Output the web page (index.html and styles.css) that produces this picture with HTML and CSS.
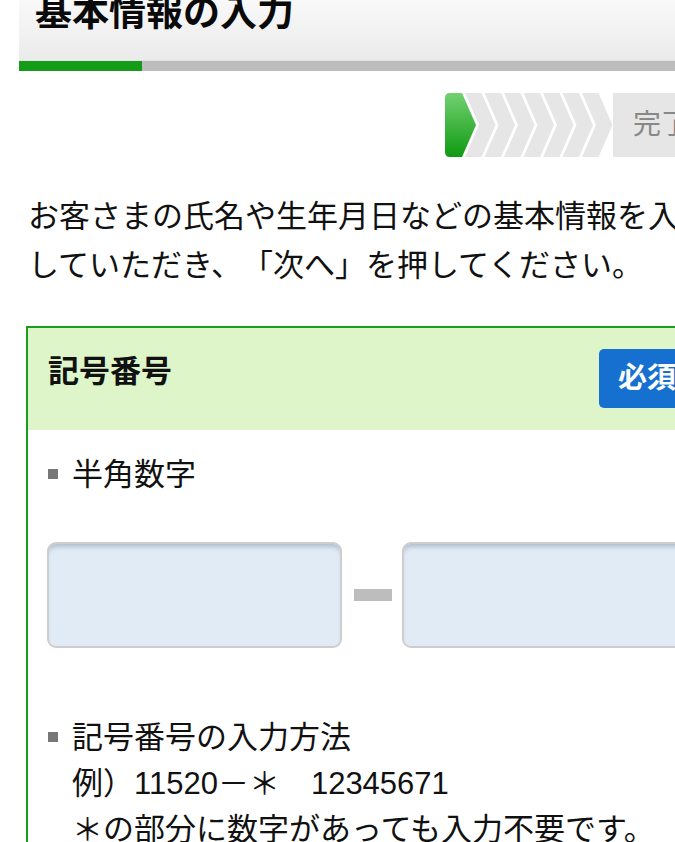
FILE: index.html
```html
<!DOCTYPE html>
<html>
<head>
    <meta charset="utf-8">
    <title>基本情報の入力</title>
    <link rel="stylesheet" href="styles.css">
</head>
<body>
    <div class="page">
        <div class="page-head">
            <h1>基本情報の入力</h1>
        </div>
        <div class="progress">
            <div class="progress-done"></div>
        </div>

        <div class="steps">
            <svg class="steps-arrows" width="168" height="64" viewBox="0 0 168 64">
                <defs>
                    <linearGradient id="stepGreen" x1="0" y1="0" x2="0" y2="1">
                        <stop offset="0" stop-color="#72d172"/>
                        <stop offset="1" stop-color="#0f9a12"/>
                    </linearGradient>
                </defs>
                <path d="M5,0 H17 L31,32 L17,64 H5 Q0,64 0,59 V5 Q0,0 5,0 Z" fill="url(#stepGreen)"/>
                <g fill="#e6e6e6">
                    <polygon points="20,0 36.5,0 50.5,32 36.5,64 20,64 34,32"/>
                    <polygon points="39.5,0 56,0 70,32 56,64 39.5,64 53.5,32"/>
                    <polygon points="59,0 75.5,0 89.5,32 75.5,64 59,64 73,32"/>
                    <polygon points="78.5,0 95,0 109,32 95,64 78.5,64 92.5,32"/>
                    <polygon points="98,0 114.5,0 128.5,32 114.5,64 98,64 112,32"/>
                    <polygon points="117.5,0 134,0 148,32 134,64 117.5,64 131.5,32"/>
                    <polygon points="137,0 153.5,0 167.5,32 153.5,64 137,64 151,32"/>
                </g>
            </svg>
            <div class="steps-last">完了</div>
        </div>

        <p class="lead">お客さまの氏名や生年月日などの基本情報を入力していただき、「次へ」を押してください。</p>

        <div class="card">
            <div class="card-head">
                <h2>記号番号</h2>
                <span class="badge">必須</span>
            </div>
            <div class="card-body">
                <p class="note">半角数字</p>
                <div class="fields">
                    <input class="field field-short" type="text">
                    <span class="dash"></span>
                    <input class="field field-long" type="text">
                </div>
                <p class="note note-help">記号番号の入力方法<br>例）11520－＊　12345671<br>＊の部分に数字があっても入力不要です。</p>
            </div>
        </div>
    </div>
</body>
</html>
```

FILE: styles.css
```css
body {
    margin: 0;
    padding: 0;
    overflow: hidden;
    background-color: #ffffff;
    font-family: "Liberation Sans", "Noto Sans CJK JP", sans-serif;
    color: #111111;
    text-spacing-trim: space-all;
}

.page {
    width: 705px;
    margin-left: 19px;
}

.page-head {
    margin-top: -28px;
    height: 89px;
    box-sizing: border-box;
    padding: 22px 16px 0 16px;
    background: linear-gradient(#ffffff, #ebebeb);
    border-bottom: 1px solid #e2e2e2;
}

.page-head h1 {
    margin: 0;
    font-size: 37px;
    line-height: 40px;
    font-weight: 700;
    color: #0a0a0a;
}

.progress {
    height: 10px;
    background-color: #bdbdbd;
}

.progress-done {
    width: 123px;
    height: 100%;
    background-color: #149b18;
}

.steps {
    display: flex;
    margin: 22px 0 0 426px;
    height: 64px;
}

.steps-arrows {
    display: block;
    flex: none;
}

.steps-last {
    flex: none;
    width: 120px;
    padding-left: 20px;
    background-color: #e6e6e6;
    color: #888888;
    font-size: 28px;
    line-height: 64px;
}

.lead {
    margin: 35px 0 0 9px;
    font-size: 31px;
    line-height: 49px;
}

.card {
    margin: 36px 7px 0 7px;
    border: 2px solid #1c9c1c;
}

.card-head {
    display: flex;
    align-items: flex-start;
    height: 102px;
    box-sizing: border-box;
    padding: 21px 20px 0 20px;
    background-color: #ddf5c8;
}

.card-head h2 {
    margin: 5px 0 0 0;
    font-size: 31px;
    line-height: 36px;
    font-weight: 700;
}

.badge {
    margin-left: auto;
    height: 59px;
    padding: 0 19px;
    border-radius: 5px;
    background-color: #1570cf;
    color: #ffffff;
    font-size: 29px;
    font-weight: 700;
    line-height: 59px;
}

.card-body {
    padding: 22px 20px 0 19px;
}

.note {
    position: relative;
    margin: 0;
    padding-left: 25px;
    font-size: 31px;
    line-height: 46px;
}

.note::before {
    content: "";
    position: absolute;
    left: 1px;
    top: 17px;
    width: 10px;
    height: 10px;
    background-color: #777777;
}

.note-help {
    margin-top: 67px;
}

.fields {
    display: flex;
    align-items: center;
    margin-top: 44px;
}

.field {
    flex: none;
    height: 106px;
    box-sizing: border-box;
    border: 2px solid #cdcdcd;
    border-radius: 9px;
    background-color: #e1ebf6;
    box-shadow: inset 0 5px 4px -2px rgba(120, 140, 160, 0.45);
    outline: none;
}

.field-short {
    width: 295px;
}

.field-long {
    width: 295px;
}

.dash {
    flex: none;
    width: 38px;
    height: 12px;
    margin: 0 10px 0 12px;
    background-color: #bdbdbd;
}
```
